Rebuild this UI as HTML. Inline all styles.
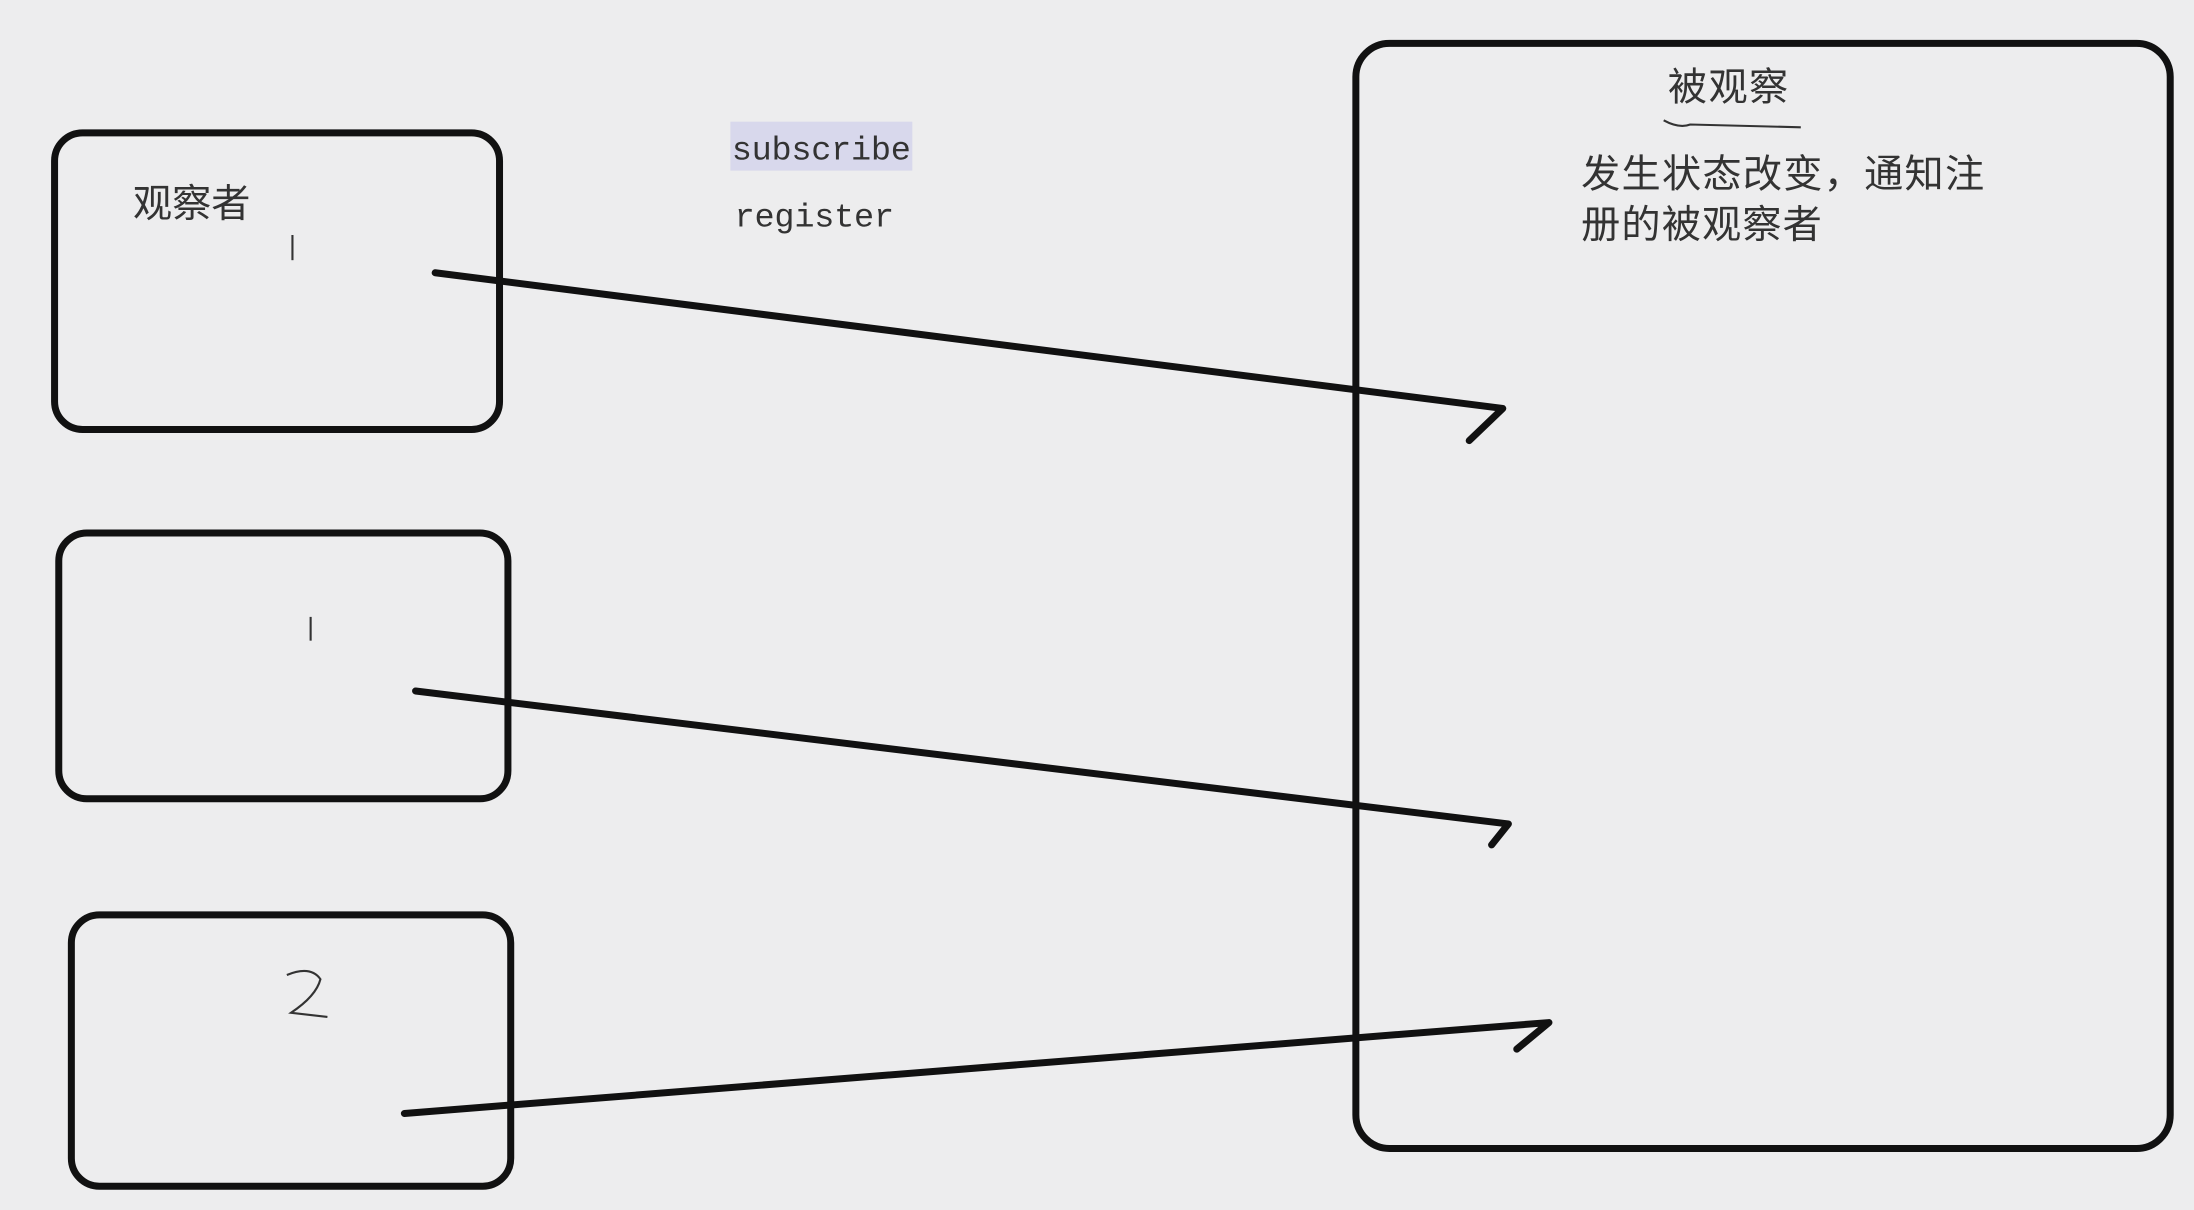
<!DOCTYPE html>
<html><head><meta charset="utf-8"><style>
html,body{margin:0;padding:0;background:#ededee;}
svg{display:block;}
</style></head><body>
<svg width="2194" height="1210" viewBox="0 0 1568 865" preserveAspectRatio="none" xmlns="http://www.w3.org/2000/svg">
<rect width="1568" height="865" fill="#ededee"/>
<g fill="none" stroke="#111" stroke-width="5" stroke-linecap="round" stroke-linejoin="round">
<rect x="39" y="95" width="318" height="212" rx="20"/>
<rect x="42" y="381" width="321" height="190" rx="20"/>
<rect x="51" y="654" width="314" height="194" rx="20"/>
<rect x="969" y="31" width="582" height="790" rx="24"/>
<path d="M311 195 L1074 292 L1050 315"/>
<path d="M297 494 L1078 589 L1066 604"/>
<path d="M289 796 L1107 731 L1084 750"/>
</g>
<g fill="none" stroke="#333" stroke-width="1.5">
<path d="M209 168 L209 186"/>
<path d="M222 441 L222 458"/>
<path d="M205 697 Q222 690 229 700 Q226 712 208 724 L234 727"/>
<path d="M1189 86 Q1200 92 1208 89 L1287 91"/>
</g>
<rect x="522" y="87" width="130" height="35" fill="#d8d8ec"/>
<g font-family="'Liberation Mono',monospace" font-size="24" fill="#333">
<text x="523" y="114" textLength="128">subscribe</text>
<text x="525" y="162" textLength="114">register</text>
</g>
<g font-family="'Liberation Sans','Noto Sans CJK SC',sans-serif" font-size="28" fill="#333">
<text x="95" y="155" textLength="84">观察者</text>
<text x="1192" y="72" textLength="86">被观察</text>
<text x="1130" y="134" textLength="288">发生状态改变，通知注</text>
<text x="1130" y="170" textLength="172">册的被观察者</text>
</g>
</svg>
</body></html>
